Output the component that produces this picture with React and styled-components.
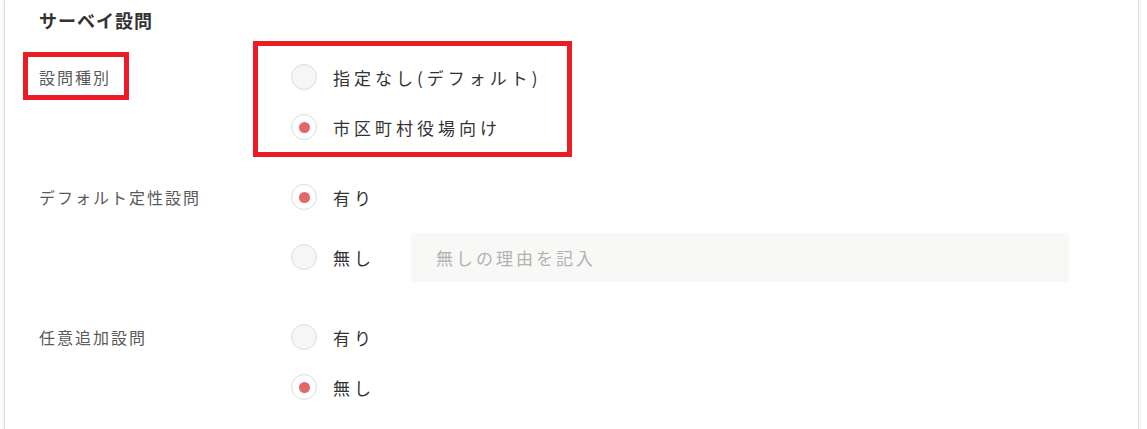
import React from 'react';
import styled, { createGlobalStyle } from 'styled-components';

const GlobalStyle = createGlobalStyle`
  body {
    margin: 0;
    background: #ffffff;
    font-family: "Noto Sans CJK JP", "Noto Sans", sans-serif;
  }
`

const Card = styled.div`
  box-sizing: border-box;
  width: 1135px;
  height: 429px;
  overflow: hidden;
  margin-left: 4px;
  padding: 8px 0 0 34px;
  background: #ffffff;
  border-left: 1px solid #dedede;
  border-right: 1px solid #dedede;
  box-shadow: 0 0 4px rgba(0, 0, 0, 0.12);
`

const Title = styled.h2`
  margin: 0 0 20px;
  font-size: 18px;
  line-height: 24px;
  font-weight: 700;
  letter-spacing: 1px;
  color: #333333;
`

const Group = styled.div`
  display: grid;
  grid-template-columns: 253px 1fr;
  margin-bottom: 20px;
`

const Label = styled.div`
  font-size: 16px;
  line-height: 50px;
  letter-spacing: 2px;
  color: #5a5a5a;
`

const LabelText = styled.span`
  position: relative;
  display: inline-block;
`

const Options = styled.div`
  position: relative;
  display: flex;
  flex-direction: column;
`

const Option = styled.label`
  display: flex;
  align-items: center;
  min-height: 50px;
  margin: ${p => (p.$spaced ? '10px 0' : '0')};
  cursor: pointer;
`

const Radio = styled.span`
  box-sizing: border-box;
  flex: none;
  display: flex;
  align-items: center;
  justify-content: center;
  width: 26px;
  height: 26px;
  margin-left: -1px;
  border-radius: 50%;
  border: 1px solid #dddddd;
  background: ${p => (p.$checked ? '#ffffff' : '#f6f6f6')};

  &::after {
    content: '';
    display: ${p => (p.$checked ? 'block' : 'none')};
    width: 11px;
    height: 11px;
    border-radius: 50%;
    background: #e06868;
  }
`

const OptionText = styled.span`
  margin-left: 16px;
  font-size: 17px;
  letter-spacing: 4px;
  color: #333333;
  white-space: nowrap;
`

const ReasonInput = styled.input`
  box-sizing: border-box;
  width: 658px;
  height: 49px;
  margin-left: 36px;
  padding: 0 0 0 25px;
  border: none;
  outline: none;
  background: #f8f8f7;
  font-family: inherit;
  font-size: 17px;
  letter-spacing: 3px;
  color: #333333;

  &::placeholder {
    color: #b2b2b2;
  }
`

// red annotation frame drawn over the screenshot
const Mark = styled.span`
  position: absolute;
  box-sizing: border-box;
  top: ${p => p.$top}px;
  left: ${p => p.$left}px;
  width: ${p => p.$w}px;
  height: ${p => p.$h}px;
  border: 5px solid #ec1c24;
  pointer-events: none;
`

const RadioOption = ({ checked, text, spaced, children }) => (
  <Option $spaced={spaced}>
    <Radio $checked={checked} />
    <OptionText>{text}</OptionText>
    {children}
  </Option>
)

export default function App() {
  return (
    <>
      <GlobalStyle />
      <Card>
        <Title>サーベイ設問</Title>

        <Group>
          <Label>
            <LabelText>
              設問種別
              <Mark $top={0} $left={-16} $w={106} $h={48} />
            </LabelText>
          </Label>
          <Options>
            <RadioOption text="指定なし(デフォルト)" />
            <RadioOption checked text="市区町村役場向け" />
            <Mark $top={-11} $left={-39} $w={319} $h={116} />
          </Options>
        </Group>

        <Group>
          <Label>デフォルト定性設問</Label>
          <Options>
            <RadioOption checked text="有り" />
            <RadioOption spaced text="無し">
              <ReasonInput placeholder="無しの理由を記入" />
            </RadioOption>
          </Options>
        </Group>

        <Group>
          <Label>任意追加設問</Label>
          <Options>
            <RadioOption text="有り" />
            <RadioOption checked text="無し" />
          </Options>
        </Group>
      </Card>
    </>
  );
}
